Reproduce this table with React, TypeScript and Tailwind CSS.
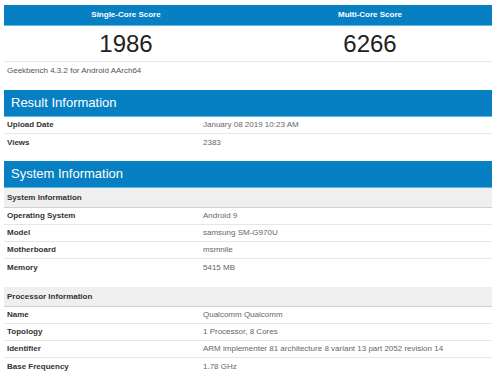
const systemRows = [
  ["Operating System", "Android 9"],
  ["Model", "samsung SM-G970U"],
  ["Motherboard", "msmnile"],
  ["Memory", "5415 MB"],
];

const processorRows = [
  ["Name", "Qualcomm Qualcomm"],
  ["Topology", "1 Processor, 8 Cores"],
  ["Identifier", "ARM implementer 81 architecture 8 variant 13 part 2052 revision 14"],
  ["Base Frequency", "1.78 GHz"],
];

function Bar({ title, className }: { title: string; className?: string }) {
  return (
    <div
      className={
        "flex h-[27px] items-center border-b border-[#5ab8e6] bg-[#0680c2] pl-[7px] text-[13px] text-white " +
        (className ?? "")
      }
    >
      {title}
    </div>
  );
}

function Row({ label, value, last }: { label: string; value: string; last?: boolean }) {
  return (
    <div
      className={
        "flex h-[17px] items-center text-[8px] " + (last ? "" : "border-b border-[#e6e6e6]")
      }
    >
      <div className="w-[196px] pl-[3px] font-bold text-[#333]">{label}</div>
      <div className="flex-1 pl-[3px] text-[#666]">{value}</div>
    </div>
  );
}

function SubHead({ title, className }: { title: string; className?: string }) {
  return (
    <div
      className={
        "flex h-[20px] items-center border-b border-[#cfcfcf] bg-[#efefef] pl-[3px] text-[8px] font-bold text-[#333] " +
        (className ?? "")
      }
    >
      {title}
    </div>
  );
}

export default function App() {
  return (
    <div
      className="h-[375px] w-[496px] overflow-hidden bg-white px-[4px] pt-[5px]"
      style={{ fontFamily: '"Liberation Sans", Arial, sans-serif' }}
    >
      <div className="grid grid-cols-2">
        <div className="flex h-[21px] items-center justify-center border-b border-[#5ab8e6] bg-[#0680c2] text-[8px] font-bold text-white">
          Single-Core Score
        </div>
        <div className="flex h-[21px] items-center justify-center border-b border-[#5ab8e6] bg-[#0680c2] text-[8px] font-bold text-white">
          Multi-Core Score
        </div>
        <div className="flex h-[36px] items-center justify-center border-b border-[#e6e6e6] text-[24px] text-[#222]">
          1986
        </div>
        <div className="flex h-[36px] items-center justify-center border-b border-[#e6e6e6] text-[24px] text-[#222]">
          6266
        </div>
      </div>
      <div className="flex h-[18px] items-center pl-[3px] text-[8px] text-[#555]">
        Geekbench 4.3.2 for Android AArch64
      </div>

      <Bar title="Result Information" className="mt-[10px]" />
      <Row label="Upload Date" value="January 08 2019 10:23 AM" />
      <Row label="Views" value="2383" last />

      <Bar title="System Information" className="mt-[10px]" />
      <SubHead title="System Information" />
      {systemRows.map(([l, v], i) => (
        <Row key={l} label={l} value={v} last={i === systemRows.length - 1} />
      ))}

      <SubHead title="Processor Information" className="mt-[11px]" />
      {processorRows.map(([l, v], i) => (
        <Row key={l} label={l} value={v} last={i === processorRows.length - 1} />
      ))}
    </div>
  );
}
